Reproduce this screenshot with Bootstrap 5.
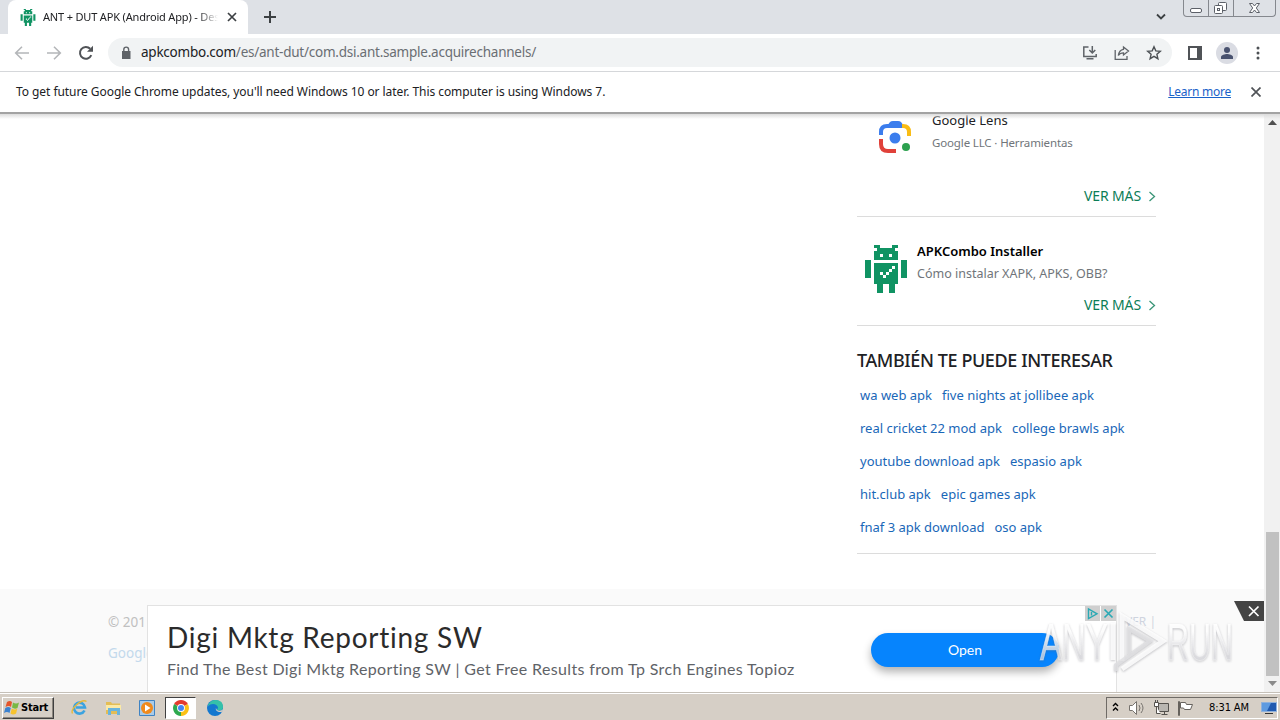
<!DOCTYPE html>
<html lang="es">
<head>
  <meta charset="UTF-8" />
  <meta name="viewport" content="width=device-width, initial-scale=1" />
  <title>ANT + DUT APK (Android App)</title>
  <link href="https://cdn.jsdelivr.net/npm/bootstrap@5.3.2/dist/css/bootstrap.min.css" rel="stylesheet" />
  <style>
    body {
      font-family: "Noto Sans", "Open Sans", sans-serif;
      font-size: 14px;
      color: #202124;
    }

    svg { display: block; flex-shrink: 0; }

    .screen { width: 1280px; height: 720px; }

    /* Chrome */
    .tabstrip { height: 34px; background: #dee1e6; }
    .tab-page {
      width: 240px;
      height: 34px;
      margin-left: 8px;
      padding: 0 10px 0 12px;
      background: #fff;
      border-radius: 8px 8px 0 0;
    }
    .tab-title {
      width: 175px;
      margin-left: 7px;
      font-size: 11px;
      letter-spacing: -.17px;
      -webkit-mask-image: linear-gradient(90deg, #000 155px, transparent 175px);
    }
    .tab-close { margin-left: 9px; }
    .win-buttons {
      width: 93px;
      height: 17px;
      margin-right: 4px;
      border: 1px solid #85888e;
      border-top: 0;
      border-radius: 0 0 4px 4px;
    }
    .win-buttons > div { border-right: 1px solid #85888e; }
    .win-buttons > div:last-child { border-right: 0; }

    .toolbar { height: 38px; border-bottom: 1px solid #d5d7da; padding: 4px 0 4px 14px; }
    .omnibox { width: 1064px; height: 29px; margin-left: 14px; background: #f1f3f4; padding: 0 10px 0 12px; }
    .address { font-size: 13.5px; margin-left: 9px; letter-spacing: -.24px; color: #6a6e73; }
    .address b { font-weight: 400; color: #202124; }
    .avatar { width: 22px; height: 22px; margin: 0 17px 0 14px; background: #dadce3; }

    .infobar {
      height: 42px;
      padding: 1px 19px 2px 16px;
      border-bottom: 2px solid #a3a3a3;
      font-size: 12px;
      letter-spacing: -.06px;
    }
    .infobar a { color: #1a62c9; letter-spacing: -.25px; }

    /* Page */
    .viewport-area { height: 578px; background: #fff; }
    .viewport-area::before {
      content: "";
      position: absolute;
      inset: 0 0 auto 0;
      height: 5px;
      background: linear-gradient(#dcdcdc, transparent);
      z-index: 5;
    }
    .side { width: 299px; margin-left: 857px; height: 481px; }
    .side-block { border-bottom: 1px solid #dcdcdc; }
    .lens-block { margin-top: -6px; padding-bottom: 8px; height: 109px; }
    .lens-icon { margin: 11px 20px 0 21px; }
    .installer-block { padding: 22px 0 8px; height: 109px; }
    .robot-icon { margin: 6px 10px 0 8px; }
    .app-name { line-height: 24px; }
    .app-note { line-height: 22px; color: #70757a; }
    .lens-name { font-size: 13px; padding-top: 1px; line-height: 23px; }
    .lens-block .app-note { font-size: 11.5px; letter-spacing: -.14px; }
    .installer-block .app-note { font-size: 12.5px; }
    .installer-block .app-name { font-weight: 600; font-size: 13px; color: #000; }
    .ver-mas { line-height: 24px; color: #0c7d57; gap: 7px; letter-spacing: -.12px; }
    .side h2 { margin: 20px 0 5px; font-size: 18px; line-height: 28px; font-weight: 500; letter-spacing: -.4px; white-space: nowrap; }
    .tag-row { height: 33px; padding-left: 3px; gap: 10px; }
    .tag-row:last-child { margin-bottom: 9px; }
    .tag-row a { color: #1967b8; text-decoration: none; font-size: 13px; white-space: nowrap; }

    .page-footer { height: 103px; background: #fafafa; padding: 18px 0 0 108px; color: #c0c0c0; line-height: 31px; font-size: 13.5px; }
    .page-footer a { color: #c3d9ec; text-decoration: none; }

    /* Banner */
    .banner {
      left: 147px;
      bottom: 0;
      width: 970px;
      height: 87px;
      background: #fff;
      border: 1px solid #e2e2e2;
      border-bottom: 0;
      padding: 12px 57px 0 19px;
      font-family: Lato, "Open Sans", sans-serif;
    }
    .banner-title { font-size: 28px; line-height: 38px; letter-spacing: .74px; color: #2b2b2b; white-space: nowrap; }
    .banner-text { font-size: 16px; line-height: 25px; letter-spacing: .35px; color: #5f6368; white-space: nowrap; }
    .banner-open {
      width: 188px;
      height: 34px;
      margin-top: 15px;
      padding: 0 0 2px;
      background: #0684fd;
      color: #fff;
      font-size: 14px;
      box-shadow: 0 5px 9px rgba(0, 0, 0, .3);
    }
    .ad-marks { top: 0; right: 0; gap: 1px; }
    .ad-marks svg { background: #cfcfcf; }
    .banner-close { right: 0; bottom: 71px; }
    .footer-peek { left: 1125px; bottom: 61px; font-size: 12px; color: #cfd4df; }
    .watermark { right: 16px; bottom: 12px; z-index: 10; filter: drop-shadow(0 1px 1px rgba(90, 90, 100, .4)); }

    .scroll { width: 16px; background: #f1f1f1; padding: 0 2px; }
    .scroll-thumb { height: 144px; width: 13px; background: #c1c1c1; }

    /* Taskbar */
    .taskbar {
      height: 28px;
      background: #d6cfc6;
      border-top: 1px solid #c5c0b8;
      box-shadow: inset 0 1px #fff;
      padding: 2px 2px 0;
      font-family: "DejaVu Sans Condensed", "DejaVu Sans", sans-serif;
      font-size: 11px;
      color: #000;
    }
    .start {
      width: 52px;
      height: 22px;
      border: 1px solid;
      border-color: #fff #404040 #404040 #fff;
      box-shadow: inset -1px -1px #8c877f;
      font-weight: 700;
      letter-spacing: -.2px;
      padding-left: 1px;
      gap: 1px;
    }
    .start span { padding-top: 1px; }
    .launch { width: 34px; height: 22px; }
    .launch.on {
      width: 31px;
      margin: 0 2px 0 1px;
      background: #fff;
      border: 1px solid;
      border-color: #404040 #fff #fff #404040;
    }
    .tray {
      width: 172px;
      height: 22px;
      border: 1px solid;
      border-color: #6f6b66 #fff #fff #6f6b66;
      padding-left: 4px;
    }
    .clock { margin-left: 14px; padding-top: 1px; letter-spacing: -.1px; white-space: nowrap; }
  </style>
</head>
<body class="overflow-hidden">
  <!-- APKCombo robot, shared by the tab and the sidebar -->
  <svg width="0" height="0" class="position-absolute">
    <symbol id="robot" viewBox="0 0 14 16">
      <path fill="#109363" d="M3 0h2v1h4V0h2v1h-1v1h1v3H3V2h1V1H3zM0 5h2v6H0zM12 5h2v6h-2zM3 6h8v7h-1v3H8v-3H6v3H4v-3H3z"/>
      <path fill="#fff" d="M5 3h1v1H5zM8 3h1v1H8zM5 9h1v1H5zM6 10h1v1H6zM7 9h1v1H7zM8 8h1v1H8zM9 7h1v1H9z"/>
    </symbol>
  </svg>

  <div class="screen d-flex flex-column">
    <div class="tabstrip d-flex">
      <div class="tab-page d-flex align-items-center">
        <svg width="16" height="17"><use href="#robot"/></svg>
        <div class="tab-title text-nowrap overflow-hidden">ANT + DUT APK (Android App) - Desc</div>
        <svg class="tab-close" width="10" height="10" viewBox="0 0 10 10" stroke="#3c4043" stroke-width="1.7"><path d="M1 1l8 8M9 1l-8 8"/></svg>
      </div>
      <svg class="ms-3 mt-2" width="12" height="17" viewBox="0 0 12 17" stroke="#3c4043" stroke-width="2"><path d="M6 3v12M0 9h12"/></svg>
      <svg class="ms-auto" width="11" height="34" viewBox="0 0 11 34" fill="none" stroke="#3c4043" stroke-width="1.8"><path d="M1 14.500l4 4 4-4"/></svg>
      <div class="win-buttons d-flex ms-3">
        <div><svg width="24" height="16" fill="#fff" stroke="#5c6068"><rect x="6.500" y="8.500" width="11" height="4" rx="1.500"/></svg></div>
        <div><svg width="24" height="16" fill="#fff" stroke="#5c6068"><rect x="9.500" y="2.500" width="8" height="8" rx="1"/><rect x="5.500" y="5.500" width="8" height="8" rx="1"/><rect x="8.500" y="8.500" width="2" height="2"/></svg></div>
        <div><svg width="40" height="16" fill="#fff" stroke="#5c6068"><path d="M15.500 3.500h3l2 2.500 2-2.500h3L22.300 8l3.200 4.500h-3l-2-2.500-2 2.500h-3L18.700 8z"/></svg></div>
      </div>
    </div>

    <div class="toolbar d-flex align-items-center">
      <svg width="16" height="16" viewBox="0 0 16 16" fill="none" stroke="#b4b6b9" stroke-width="1.6"><path d="M15 8H2M8 1.700L1.700 8 8 14.300"/></svg>
      <svg class="ms-3" width="16" height="16" viewBox="0 0 16 16" fill="none" stroke="#b4b6b9" stroke-width="1.6"><path d="M1 8h13M8 1.700L14.300 8 8 14.300"/></svg>
      <svg class="ms-3" width="16" height="16" viewBox="0 0 16 16" fill="none" stroke="#505357" stroke-width="2"><path d="M13.300 10.200A5.900 5.900 0 1 1 12.200 3.800"/><path d="M15 .8v6H9z" fill="#505357" stroke="none"/></svg>
      <div class="omnibox rounded-pill d-flex align-items-center flex-shrink-0">
        <svg width="12" height="14" viewBox="0 0 12 14"><path fill="#5f6368" d="M2 5h8.500v8H2z"/><path d="M3.800 5V3.500a2.400 2.400 0 0 1 4.800 0V5" fill="none" stroke="#5f6368" stroke-width="1.4"/></svg>
        <div class="address"><b>apkcombo.com</b>/es/ant-dut/com.dsi.ant.sample.acquirechannels/</div>
        <div class="d-flex align-items-center ms-auto gap-3">
          <svg width="16" height="16" viewBox="0 0 16 16" fill="none" stroke="#5f6368" stroke-width="1.5"><path d="M6.500 2H1.800v9.500h12.400V9M10.300 1v6.500M7.300 5l3 3 3-3M4.500 13.800h7"/></svg>
          <svg width="16" height="16" viewBox="0 0 16 16" fill="none" stroke="#5f6368" stroke-width="1.3"><path d="M1.200 5v9.300H13V11M9.500 2l5 4-5 4V7.800C7 7.800 5.500 8.700 4.300 10.500 4.800 7 6.500 4.800 9.500 4.300z"/></svg>
          <svg width="16" height="16" viewBox="0 0 16 16" fill="none" stroke="#4c5054" stroke-width="1.4"><path d="M8 1.800l1.800 4.100 4.500.4-3.400 3 1 4.400L8 11.400l-3.900 2.300 1-4.400-3.400-3 4.500-.4z"/></svg>
        </div>
      </div>
      <svg class="ms-3" width="14" height="14" viewBox="0 0 14 14"><path fill="none" stroke="#505357" stroke-width="2" d="M1 1h12v12H1z"/><path fill="#505357" d="M9 1h4v12H9z"/></svg>
      <div class="avatar rounded-circle d-flex justify-content-center align-items-center flex-shrink-0">
        <svg width="14" height="14" viewBox="0 0 14 14" fill="#49526f"><circle cx="7" cy="4" r="3"/><path d="M1 13v-2c0-2 4-3 6-3s6 1 6 3v2z"/></svg>
      </div>
      <svg width="6" height="14" viewBox="0 0 6 14" fill="#4c5054"><circle cx="3" cy="2" r="1.500"/><circle cx="3" cy="7" r="1.500"/><circle cx="3" cy="12" r="1.500"/></svg>
    </div>

    <div class="infobar d-flex align-items-center">
      <span>To get future Google Chrome updates, you'll need Windows 10 or later. This computer is using Windows 7.</span>
      <a href="#" class="ms-auto me-3">Learn more</a>
      <svg class="ms-1" width="10" height="10" viewBox="0 0 10 10" stroke="#505357" stroke-width="1.7"><path d="M.5.500l9 9M9.500.500l-9 9"/></svg>
    </div>

    <div class="viewport-area d-flex position-relative overflow-hidden">
      <div class="flex-grow-1 position-relative">
        <aside class="side">
          <div class="side-block lens-block d-flex flex-column">
            <div class="d-flex">
              <svg class="lens-icon" width="34" height="34" viewBox="0 0 34 34" fill="none" stroke-width="4">
                <path stroke="#3b7ded" d="M3 16v-3q0-6 6-6h14"/>
                <path fill="#3b7ded" d="M9 7l3-4q1-1 3-1h5q2 0 3 1l3 4v2H9z"/>
                <path stroke="#f9bc15" d="M24 7h1q6 0 6 6v4"/>
                <path stroke="#e0413a" d="M3 20v5q0 7 7 7h8"/>
                <circle cx="17" cy="19" r="5.500" fill="#3b7ded"/>
                <circle cx="28" cy="28" r="4" fill="#2da14f"/>
              </svg>
              <div>
                <div class="app-name lens-name">Google Lens</div>
                <div class="app-note">Google LLC · Herramientas</div>
              </div>
            </div>
            <div class="ver-mas d-flex align-items-center justify-content-end mt-auto"><span>VER MÁS</span>
              <svg width="8" height="12" viewBox="0 0 8 12" fill="none" stroke="#3a9577" stroke-width="1.3"><path d="M1.500 2l5 4.500-5 4.500"/></svg></div>
          </div>

          <div class="side-block installer-block d-flex flex-column">
            <div class="d-flex">
              <svg class="robot-icon" width="42" height="48"><use href="#robot"/></svg>
              <div>
                <div class="app-name">APKCombo Installer</div>
                <div class="app-note">Cómo instalar XAPK, APKS, OBB?</div>
              </div>
            </div>
            <div class="ver-mas d-flex align-items-center justify-content-end mt-auto"><span>VER MÁS</span>
              <svg width="8" height="12" viewBox="0 0 8 12" fill="none" stroke="#3a9577" stroke-width="1.3"><path d="M1.500 2l5 4.500-5 4.500"/></svg></div>
          </div>

          <div class="side-block">
            <h2>TAMBIÉN TE PUEDE INTERESAR</h2>
            <div class="tag-row d-flex align-items-center"><a href="#">wa web apk</a><a href="#">five nights at jollibee apk</a></div>
            <div class="tag-row d-flex align-items-center"><a href="#">real cricket 22 mod apk</a><a href="#">college brawls apk</a></div>
            <div class="tag-row d-flex align-items-center"><a href="#">youtube download apk</a><a href="#">espasio apk</a></div>
            <div class="tag-row d-flex align-items-center"><a href="#">hit.club apk</a><a href="#">epic games apk</a></div>
            <div class="tag-row d-flex align-items-center"><a href="#">fnaf 3 apk download</a><a href="#">oso apk</a></div>
          </div>
        </aside>

        <footer class="page-footer">
          <div>© 201</div>
          <div><a href="#">Google</a></div>
        </footer>

        <div class="footer-peek position-absolute">VER |</div>
        <div class="banner position-absolute d-flex justify-content-between">
          <div>
            <div class="banner-title">Digi Mktg Reporting SW</div>
            <div class="banner-text">Find The Best Digi Mktg Reporting SW | Get Free Results from Tp Srch Engines Topioz</div>
          </div>
          <button class="banner-open btn rounded-pill border-0">Open</button>
          <div class="ad-marks position-absolute d-flex">
            <svg width="15" height="15" fill="none" stroke="#2ba9b4" stroke-width="1.400"><path d="M3.500 3v9.500l8.500-4.700zM6.500 6v3.500"/></svg>
            <svg width="15" height="15" fill="none" stroke="#2ba9b4" stroke-width="1.700"><path d="M3.500 3.500l8 8M11.500 3.500l-8 8"/></svg>
          </div>
        </div>
        <svg class="banner-close position-absolute" width="30" height="20"><path fill="#444" d="M0 0h30v20H10z"/><path stroke="#fff" stroke-width="1.700" d="M15 5.500l9.500 9.500M24.500 5.500L15 15"/></svg>
      </div>

      <div class="scroll d-flex flex-column align-items-center justify-content-end">
        <svg class="mb-auto mt-1" width="9" height="8"><path fill="#505050" d="M0 7h9L4.500 2z"/></svg>
        <div class="scroll-thumb"></div>
        <svg width="9" height="16"><path fill="#8a8a8a" d="M0 5h9L4.500 10z"/></svg>
      </div>

      <svg class="watermark position-absolute" width="226" height="68" viewBox="0 0 226 68" font-family="'Liberation Sans Narrow', 'Liberation Sans', sans-serif">
        <defs>
          <linearGradient id="fade" x1="0" y1="0" x2="0" y2="1">
            <stop offset=".3" stop-color="#fff" stop-opacity=".95"/>
            <stop offset=".75" stop-color="#dedee2" stop-opacity=".75"/>
          </linearGradient>
        </defs>
        <g fill="url(#fade)" stroke="#fff" stroke-opacity=".4" font-size="51">
          <text x="2" y="48" textLength="68" lengthAdjust="spacingAndGlyphs">ANY</text>
          <text x="129" y="48" textLength="66" lengthAdjust="spacingAndGlyphs">RUN</text>
        </g>
        <g fill="none" stroke="#fff" stroke-opacity=".85">
          <path stroke-width="5" d="M75 11v37"/>
          <path stroke-width="5" d="M84 49V4l41 25-41 28"/>
          <path stroke="#e0e0e3" stroke-width="4" d="M91 42V17l21 12-34 24v6"/>
        </g>
      </svg>
    </div>

    <div class="taskbar d-flex align-items-center">
      <div class="start d-flex align-items-center">
        <svg width="16" height="16" viewBox="0 0 16 16"><path fill="#e4552b" d="M3 2q3-2 5 0L7 7Q5 5 1.500 7z"/><path fill="#78b843" d="M9 2.500q3 2 6 0L13.500 8q-3 1.500-5.500-.5z"/><path fill="#3b82d0" d="M1.300 8q3-2 5.500 0l-1.300 5q-2.500-2-5.500 0z"/><path fill="#f7c32e" d="M7.800 8.500q3 2 5.500 0l-1.200 5q-3 2-5.600 0z"/></svg>
        <span>Start</span>
      </div>
      <div class="launch d-flex align-items-center justify-content-center ms-2">
        <svg width="17" height="17" viewBox="0 0 17 17" fill="none"><path d="M13.500 11.500A5.500 5.500 0 1 1 14 8.500H5" stroke="#3ba3e0" stroke-width="2.600"/><path d="M1.500 14.500C-1 10 11-1 15.500 2.500" stroke="#e6b93b" stroke-width="1.400"/></svg>
      </div>
      <div class="launch d-flex align-items-center justify-content-center">
        <svg width="17" height="16" viewBox="0 0 17 16"><path fill="#e3bd55" d="M1 2h5l1 1.500h8V14H1z"/><path fill="#fbe9a5" d="M1 5h15v5H1z"/><path fill="#69b4dd" d="M3 8h12v7h-3v-4H6v4H3z"/></svg>
      </div>
      <div class="launch d-flex align-items-center justify-content-center">
        <svg width="16" height="16" viewBox="0 0 16 16"><path fill="#a9cbe8" stroke="#3f83c3" d="M.5.500h15v15H.5z"/><circle cx="8" cy="8" r="6" fill="#f08a1c"/><path fill="#fff" d="M6 4.500v7L11.500 8z"/></svg>
      </div>
      <div class="launch on d-flex align-items-center justify-content-center">
        <svg width="16" height="16" viewBox="0 0 16 16"><path fill="#e33b2e" d="M8 8L1.100 4A8 8 0 0 1 14.900 4z"/><path fill="#fbc116" d="M8 8l6.900-4A8 8 0 0 1 8 16z"/><path fill="#2da94f" d="M8 8v8A8 8 0 0 1 1.100 4z"/><circle cx="8" cy="8" r="3.900" fill="#fff"/><circle cx="8" cy="8" r="3" fill="#4285f4"/></svg>
      </div>
      <div class="launch d-flex align-items-center justify-content-center">
        <svg width="16" height="16" viewBox="0 0 16 16"><circle cx="8" cy="8" r="8" fill="#1478cf"/><path fill="#35c1a9" d="M1 5Q4 0 8.500 0 16 0 16 7q0 3.500-4 3.500-2 0-2-1 1-1 1-2Q10 4 6 4 3 4 1 6z"/><path fill="#d6cfc6" d="M9 8q-1 3 3 4 2 .3 3.500-.5l1-3q-1 2.200-4 2.200-3 0-3.500-2.700z"/></svg>
      </div>

      <div class="tray d-flex align-items-center ms-auto">
        <svg width="9" height="12" viewBox="0 0 9 12" fill="none" stroke="#000" stroke-width="1.400"><path d="M2 4l2.500-2.500L7 4M2 8.500L4.500 6 7 8.500"/></svg>
        <svg class="ms-2" width="18" height="16" viewBox="0 0 18 16" fill="#fff" stroke="#77736e"><path d="M1.500 5.500h3l4-4v13l-4-4h-3z"/><path fill="none" d="M11 5q2 3 0 6M13 3q4 5 0 10"/></svg>
        <svg class="ms-2" width="16" height="16" viewBox="0 0 16 16" fill="#fff" stroke="#55524e"><path fill="#b9b6b1" d="M4.500 3.500h10v8h-10zM7.500 14.500h6M10.500 11.500v3"/><path d="M.5 2.500h4v4h-4zM2.500 6.500v7h4M1.500 0v2M3.500 0v2"/></svg>
        <svg class="ms-2" width="17" height="16" viewBox="0 0 17 16" fill="#fff" stroke="#66625d"><path d="M.5 1.500h1v14h-1zM2.500 2.500h5l1 2h6l-2 5h-6l-1-1.500h-3z"/></svg>
        <div class="clock">8:31 AM</div>
        <svg class="ms-auto" width="16" height="14" viewBox="0 0 16 14"><path fill="#2059b0" stroke="#8fb1dc" d="M.5 1.500h15v9H.5z"/><path fill="#5d9ae0" d="M1 2h9l-4 8H1z"/><path fill="#333" d="M4 12h8v1H4z"/></svg>
      </div>
    </div>
  </div>
  <script src="https://cdn.jsdelivr.net/npm/bootstrap@5.3.2/dist/js/bootstrap.bundle.min.js"></script>
</body>
</html>
